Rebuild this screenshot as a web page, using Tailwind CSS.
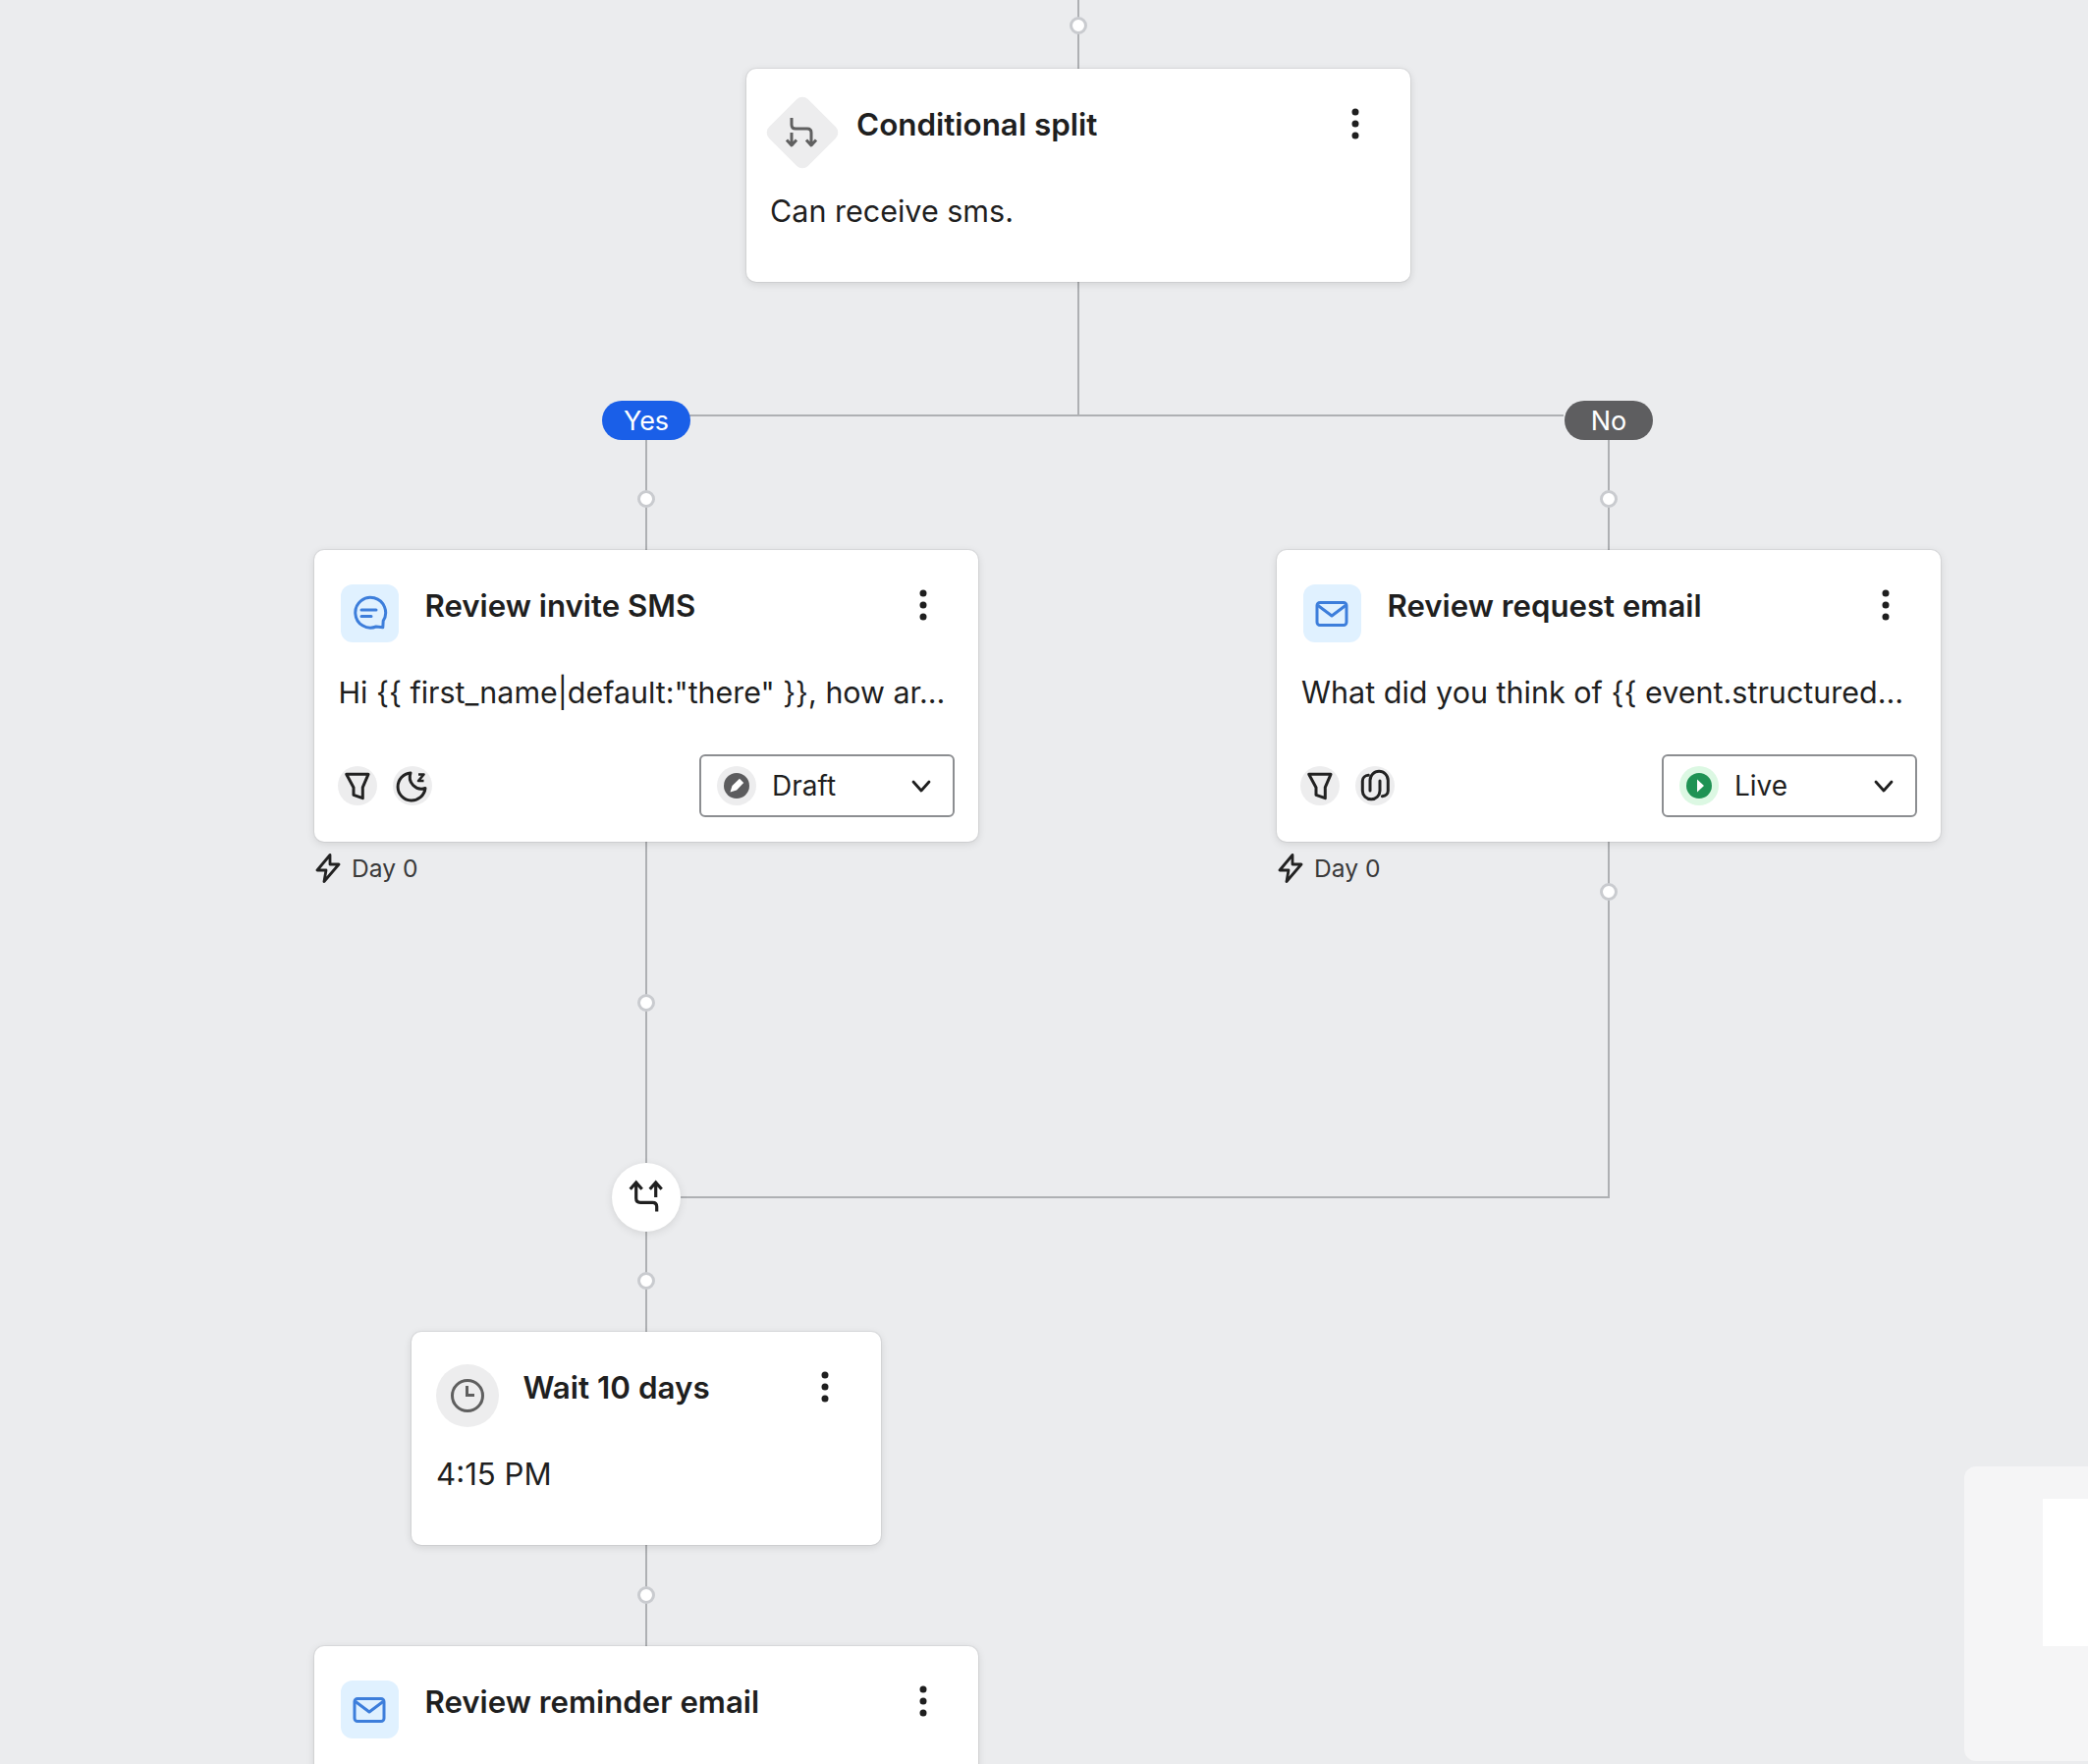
<!DOCTYPE html>
<html>
<head>
<meta charset="utf-8">
<script src="https://cdn.jsdelivr.net/npm/@tailwindcss/browser@4"></script>
</head>
<body class="m-0">
<div class="relative w-[2126px] h-[1796px] overflow-hidden bg-[#ebecee] font-['Inter',sans-serif] text-[#1f1f1f]">

  <!-- connectors -->
  <svg class="absolute inset-0" width="2126" height="1796" fill="none" stroke="#aeb0b3" stroke-width="2">
    <path d="M1098 0V70M1098 287V423M702 423H1592M658 448V560M1638 448V560M658 857V1184M1638 857V1219H693M658 1254V1356M658 1572V1676"/>
    <g fill="#fff" stroke="#c9cbcf" stroke-width="3">
      <circle cx="1098" cy="26" r="7.5"/>
      <circle cx="658" cy="508" r="7.5"/>
      <circle cx="1638" cy="508" r="7.5"/>
      <circle cx="658" cy="1021" r="7.5"/>
      <circle cx="1638" cy="908" r="7.5"/>
      <circle cx="658" cy="1304" r="7.5"/>
      <circle cx="658" cy="1624" r="7.5"/>
    </g>
  </svg>

  <!-- Conditional split -->
  <div class="absolute left-[760px] top-[70px] w-[676px] h-[217px] rounded-[10px] bg-white shadow-[0_0_0_1px_rgba(0,0,0,0.05),0_2px_8px_rgba(0,0,0,0.12)]">
    <div class="flex items-start pt-[24px] pl-[16px] pr-[52px]">
      <div class="w-[81px] h-[81px] flex items-center justify-center">
        <div class="relative w-[56px] h-[56px] flex items-center justify-center">
          <div class="absolute inset-0 rotate-45 rounded-lg bg-[#ededee]"></div>
          <svg class="relative -translate-x-px" width="40" height="40" viewBox="0 0 40 40" fill="none" stroke="#606060" stroke-width="3" stroke-linejoin="round"><path d="M10 5V12Q10 16 14 16H26Q30 16 30 20V32M10 20V32M5 27.5L10 33L15 27.5M25 27.5L30 33L35 27.5"/></svg>
        </div>
      </div>
      <div class="ml-[15px] mt-[12px] leading-[43px] text-[31.4px] font-semibold">Conditional split</div>
      <svg class="ml-auto mt-[16px]" width="8" height="32" viewBox="0 0 8 32" fill="#1f1f1f"><circle cx="4" cy="4" r="3.5"/><circle cx="4" cy="16" r="3.5"/><circle cx="4" cy="28" r="3.5"/></svg>
    </div>
    <div class="ml-[24px] mt-[16px] leading-[48px] text-[30.5px]">Can receive sms.</div>
  </div>

  <!-- Branch pills -->
  <div class="absolute left-[613px] top-[408px] w-[90px] h-[40px] rounded-[20px] bg-[#1a5fe8] text-white text-[27px] flex items-center justify-center pt-[2px]">Yes</div>
  <div class="absolute left-[1593px] top-[408px] w-[90px] h-[40px] rounded-[20px] bg-[#5e5e60] text-white text-[27px] flex items-center justify-center pt-[2px]">No</div>

  <!-- Review invite SMS -->
  <div class="absolute left-[320px] top-[560px] w-[676px]">
    <div class="h-[297px] rounded-[10px] bg-white shadow-[0_0_0_1px_rgba(0,0,0,0.05),0_2px_8px_rgba(0,0,0,0.12)] flex flex-col">
      <div class="flex items-start pt-[24px] pl-[16px] pr-[52px]">
        <div class="w-[81px] h-[81px] flex items-center justify-center">
          <div class="w-[59px] h-[59px] rounded-xl bg-[#e0f1ff] flex items-center justify-center">
            <svg class="-translate-x-px" width="40" height="40" viewBox="0 0 40 40" fill="none" stroke="#3d7edb" stroke-width="3" stroke-linecap="round" stroke-linejoin="round"><path d="M34.2 27A15.4 15.4 0 1 0 27 33L33.8 33.8Z"/><path d="M12 16H27M12 22.6H22"/></svg>
          </div>
        </div>
        <div class="ml-[15.5px] mt-[12px] leading-[43px] text-[31.2px] font-semibold">Review invite SMS</div>
        <svg class="ml-auto mt-[16px]" width="8" height="32" viewBox="0 0 8 32" fill="#1f1f1f"><circle cx="4" cy="4" r="3.5"/><circle cx="4" cy="16" r="3.5"/><circle cx="4" cy="28" r="3.5"/></svg>
      </div>
      <div class="ml-[24.5px] mt-[16px] leading-[48px] text-[30.4px] whitespace-nowrap">Hi {{ first_name|default:"there" }}, how ar…</div>
      <div class="mt-auto mb-[25px] pl-[24px] pr-[24px] flex items-center">
        <div class="flex gap-[16px]">
          <div class="w-[40px] h-[40px] rounded-full bg-[#ededee] flex items-center justify-center">
            <svg width="40" height="40" viewBox="0 0 40 40" fill="none" stroke="#222" stroke-width="3" stroke-linejoin="round"><path d="M8.7 8.3H31L25.3 21.7V32.7L16 29.3V21.7Z"/></svg>
          </div>
          <div class="w-[40px] h-[40px] rounded-full bg-[#ededee] flex items-center justify-center">
            <svg width="40" height="40" viewBox="0 0 40 40" fill="none" stroke="#222" stroke-width="3" stroke-linejoin="round"><path d="M18 7A14 14 0 1 0 33 22.5A12 12 0 0 1 18 7Z"/><path d="M26 8.5H31.5L26 15H31.5" stroke-width="2.6"/></svg>
          </div>
        </div>
        <div class="ml-auto w-[260px] h-[64px] rounded-md border-2 border-[#8c8e91] flex items-center pl-[16px] pr-[22px]">
          <div class="w-[40px] h-[40px] rounded-full bg-[#ededee] flex items-center justify-center">
            <svg width="40" height="40" viewBox="0 0 40 40"><circle cx="20" cy="20" r="13" fill="#5c5c5e"/><path d="M13.5 26.5L15.5 20L23 12.8L27.2 17L20 24.5Z" fill="#fff"/></svg>
          </div>
          <span class="ml-[16px] text-[28px] leading-[40px]">Draft</span>
          <svg class="ml-auto" width="20" height="13" viewBox="0 0 20 13" fill="none" stroke="#1f1f1f" stroke-width="2.8" stroke-linecap="round" stroke-linejoin="round"><path d="M2 2L10 11L18 2"/></svg>
        </div>
      </div>
    </div>
    <div class="mt-[12px] ml-[1px] flex items-center gap-[11px] text-[24.6px] leading-[30px] text-[#3a3a3a]">
      <svg width="26" height="30" viewBox="0 0 26 30" fill="none" stroke="#222" stroke-width="2.8" stroke-linejoin="round"><path d="M15 1.5L2 17H11L9 28.5L24 11H15Z"/></svg>
      <span>Day 0</span>
    </div>
  </div>

  <!-- Review request email -->
  <div class="absolute left-[1300px] top-[560px] w-[676px]">
    <div class="h-[297px] rounded-[10px] bg-white shadow-[0_0_0_1px_rgba(0,0,0,0.05),0_2px_8px_rgba(0,0,0,0.12)] flex flex-col">
      <div class="flex items-start pt-[24px] pl-[16px] pr-[52px]">
        <div class="w-[81px] h-[81px] flex items-center justify-center">
          <div class="w-[59px] h-[59px] rounded-xl bg-[#e0f1ff] flex items-center justify-center">
            <svg class="-translate-x-px" width="40" height="40" viewBox="0 0 40 40" fill="none" stroke="#3d7edb" stroke-width="3" stroke-linejoin="round"><rect x="5" y="8.5" width="30" height="23" rx="3"/><path d="M6 11.5L20 22L34 11.5"/></svg>
          </div>
        </div>
        <div class="ml-[15.5px] mt-[12px] leading-[43px] text-[31.2px] font-semibold">Review request email</div>
        <svg class="ml-auto mt-[16px]" width="8" height="32" viewBox="0 0 8 32" fill="#1f1f1f"><circle cx="4" cy="4" r="3.5"/><circle cx="4" cy="16" r="3.5"/><circle cx="4" cy="28" r="3.5"/></svg>
      </div>
      <div class="ml-[25px] mt-[16px] leading-[48px] text-[30.5px] whitespace-nowrap">What did you think of {{ event.structured…</div>
      <div class="mt-auto mb-[25px] pl-[24px] pr-[24px] flex items-center">
        <div class="flex gap-[16px]">
          <div class="w-[40px] h-[40px] rounded-full bg-[#ededee] flex items-center justify-center">
            <svg width="40" height="40" viewBox="0 0 40 40" fill="none" stroke="#222" stroke-width="3" stroke-linejoin="round"><path d="M8.7 8.3H31L25.3 21.7V32.7L16 29.3V21.7Z"/></svg>
          </div>
          <div class="w-[40px] h-[40px] rounded-full bg-[#ededee] flex items-center justify-center">
            <svg width="40" height="40" viewBox="0 0 40 40" fill="none" stroke="#222" stroke-width="3" stroke-linecap="round"><path d="M25 15V25A8.8 8.8 0 0 1 7.3 25V15C7.3 12 10 9.5 13.3 9.3"/><path d="M15 25V14.5A9.1 9.1 0 0 1 33.3 14.5V25C33.3 28 31 30.5 27.3 30.7"/></svg>
          </div>
        </div>
        <div class="ml-auto w-[260px] h-[64px] rounded-md border-2 border-[#8c8e91] flex items-center pl-[16px] pr-[22px]">
          <div class="w-[40px] h-[40px] rounded-full bg-[#dcf8e3] flex items-center justify-center">
            <svg width="40" height="40" viewBox="0 0 40 40"><circle cx="20" cy="20" r="13" fill="#1f9254"/><path d="M18 13.5L25 20L18 26.5Z" fill="#fff"/></svg>
          </div>
          <span class="ml-[16px] text-[28px] leading-[40px]">Live</span>
          <svg class="ml-auto" width="20" height="13" viewBox="0 0 20 13" fill="none" stroke="#1f1f1f" stroke-width="2.8" stroke-linecap="round" stroke-linejoin="round"><path d="M2 2L10 11L18 2"/></svg>
        </div>
      </div>
    </div>
    <div class="mt-[12px] ml-[1px] flex items-center gap-[11px] text-[24.6px] leading-[30px] text-[#3a3a3a]">
      <svg width="26" height="30" viewBox="0 0 26 30" fill="none" stroke="#222" stroke-width="2.8" stroke-linejoin="round"><path d="M15 1.5L2 17H11L9 28.5L24 11H15Z"/></svg>
      <span>Day 0</span>
    </div>
  </div>

  <!-- Merge node -->
  <div class="absolute left-[623px] top-[1184px] w-[70px] h-[70px] rounded-full bg-white shadow-[0_2px_8px_rgba(0,0,0,0.1)] flex items-center justify-center">
    <svg class="-translate-x-px" width="40" height="40" viewBox="0 0 40 40" fill="none" stroke="#1f1f1f" stroke-width="3.2"><path d="M10.7 6V21Q10.7 25.3 15 25.3H27.5Q31.7 25.3 31.7 29.5V34.5M30.7 6V20M4.7 11.7L10.7 5L16.7 11.7M24.7 11.7L30.7 5L36.7 11.7"/></svg>
  </div>

  <!-- Wait 10 days -->
  <div class="absolute left-[419px] top-[1356px] w-[478px] h-[217px] rounded-[10px] bg-white shadow-[0_0_0_1px_rgba(0,0,0,0.05),0_2px_8px_rgba(0,0,0,0.12)]">
    <div class="flex items-start pt-[24px] pl-[16px] pr-[53px]">
      <div class="w-[81px] h-[81px] flex items-center justify-center">
        <div class="w-[64px] h-[64px] rounded-full bg-[#ededee] flex items-center justify-center">
          <svg width="40" height="40" viewBox="0 0 40 40" fill="none" stroke="#5f5f5f" stroke-width="3"><circle cx="20" cy="20" r="15.5"/><path d="M19.5 10V19.5H27"/></svg>
        </div>
      </div>
      <div class="ml-[16.5px] mt-[12px] leading-[43px] text-[31.4px] font-semibold">Wait 10 days</div>
      <svg class="ml-auto mt-[16px]" width="8" height="32" viewBox="0 0 8 32" fill="#1f1f1f"><circle cx="4" cy="4" r="3.5"/><circle cx="4" cy="16" r="3.5"/><circle cx="4" cy="28" r="3.5"/></svg>
    </div>
    <div class="ml-[25px] mt-[16px] leading-[48px] text-[31.2px]">4:15 PM</div>
  </div>

  <!-- Review reminder email -->
  <div class="absolute left-[320px] top-[1676px] w-[676px] h-[297px] rounded-[10px] bg-white shadow-[0_0_0_1px_rgba(0,0,0,0.05),0_2px_8px_rgba(0,0,0,0.12)]">
    <div class="flex items-start pt-[24px] pl-[16px] pr-[52px]">
      <div class="w-[81px] h-[81px] flex items-center justify-center">
        <div class="w-[59px] h-[59px] rounded-xl bg-[#e0f1ff] flex items-center justify-center">
          <svg class="-translate-x-px" width="40" height="40" viewBox="0 0 40 40" fill="none" stroke="#3d7edb" stroke-width="3" stroke-linejoin="round"><rect x="5" y="8.5" width="30" height="23" rx="3"/><path d="M6 11.5L20 22L34 11.5"/></svg>
        </div>
      </div>
      <div class="ml-[15.5px] mt-[12px] leading-[43px] text-[31.2px] font-semibold">Review reminder email</div>
      <svg class="ml-auto mt-[16px]" width="8" height="32" viewBox="0 0 8 32" fill="#1f1f1f"><circle cx="4" cy="4" r="3.5"/><circle cx="4" cy="16" r="3.5"/><circle cx="4" cy="28" r="3.5"/></svg>
    </div>
  </div>

  <!-- Minimap panel -->
  <div class="absolute left-[2000px] top-[1493px] w-[200px] h-[300px] rounded-xl bg-[#f5f5f6] pt-[33px] pl-[80px]">
    <div class="w-[120px] h-[150px] bg-white"></div>
  </div>
</div>
</body>
</html>
